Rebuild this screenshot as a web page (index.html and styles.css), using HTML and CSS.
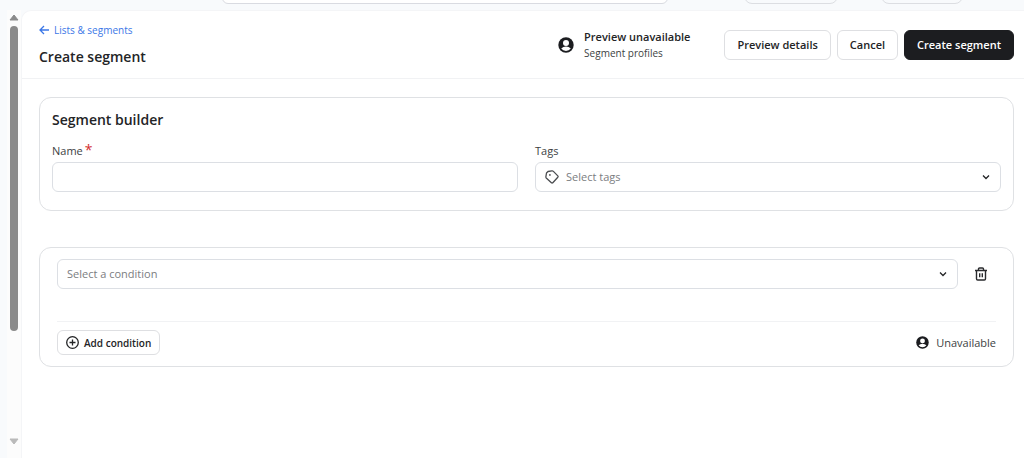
FILE: index.html
```html
<!DOCTYPE html>
<html lang="en">
<head>
    <meta charset="UTF-8">
    <meta name="viewport" content="width=device-width, initial-scale=1.0">
    <title>Create segment</title>
    <link rel="stylesheet" href="styles.css">
</head>
<body>
    <svg class="sprite" aria-hidden="true">
        <symbol id="icon-profile" viewBox="0 0 16 16">
            <circle cx="8" cy="8" r="7.700" fill="#1c1d20"/>
            <circle cx="8" cy="6" r="3" fill="#fff"/>
            <path d="M3.200 11.500a6.800 6.800 0 0 1 9.600 0a6 6 0 0 1-9.600 0z" fill="#fff"/>
        </symbol>
        <symbol id="icon-chevron" viewBox="0 0 8 8">
            <path d="M1 2.500l3 3 3-3" fill="none" stroke="#232426" stroke-width="1.300"/>
        </symbol>
    </svg>

    <div class="topbar">
        <input type="search" class="topbar-search" aria-label="Search">
        <button type="button" class="topbar-btn topbar-help" aria-label="Help"></button>
        <button type="button" class="topbar-btn topbar-account" aria-label="Account"></button>
    </div>

    <div class="layout">
        <div class="scrollbar">
            <svg width="10" height="7" viewBox="0 0 10 7"><path d="M5 1L9 6H1z" fill="#8b8b8b" stroke="#8b8b8b" stroke-linejoin="round"/></svg>
            <div class="scroll-track"><div class="scroll-thumb"></div></div>
            <svg width="10" height="7" viewBox="0 0 10 7"><path d="M5 6L9 1H1z" fill="#bababa" stroke="#bababa" stroke-linejoin="round"/></svg>
        </div>

        <main class="panel">
            <header class="page-header">
                <div class="heading">
                    <a href="#" class="back-link">
                        <svg width="10" height="10" viewBox="0 0 10 10"><path d="M10 5H1M5 1L1 5l4 4" fill="none" stroke="#3b77e7" stroke-width="1.300"/></svg>
                        Lists &amp; segments
                    </a>
                    <h1>Create segment</h1>
                </div>
                <div class="preview">
                    <svg width="16" height="16"><use href="#icon-profile"/></svg>
                    <div>
                        <strong>Preview unavailable</strong>
                        <span>Segment profiles</span>
                    </div>
                </div>
                <div class="actions">
                    <button type="button" class="btn">Preview details</button>
                    <button type="button" class="btn">Cancel</button>
                    <button type="submit" form="segmentForm" class="btn btn-primary">Create segment</button>
                </div>
            </header>

            <form id="segmentForm" class="content">
                <section class="card builder">
                    <h2>Segment builder</h2>
                    <div class="fields">
                        <div class="form-group">
                            <label for="name">Name<span class="required">*</span></label>
                            <input type="text" id="name" class="control">
                        </div>
                        <div class="form-group">
                            <label for="tags">Tags</label>
                            <div class="select-wrap">
                                <svg class="tag-icon" width="14" height="14" viewBox="0 0 14 14">
                                    <path d="M1.500 3L3 1.500 6.900.9Q7.800.8 8.400 1.400L12.800 5.900Q13.400 6.500 12.800 7.200L7.800 12.700Q7.100 13.300 6.400 12.700L1.500 8.200Q.8 7.500.9 6.700z" fill="none" stroke="#4b4d50" stroke-width="1.300" stroke-linejoin="round"/>
                                    <circle cx="4.900" cy="4.900" r=".9" fill="#4b4d50"/>
                                </svg>
                                <select id="tags" class="control has-icon">
                                    <option>Select tags</option>
                                </select>
                                <svg class="chevron" width="8" height="8"><use href="#icon-chevron"/></svg>
                            </div>
                        </div>
                    </div>
                </section>

                <section class="card conditions">
                    <div class="condition-row">
                        <div class="select-wrap">
                            <select class="control" aria-label="Condition">
                                <option>Select a condition</option>
                            </select>
                            <svg class="chevron" width="8" height="8"><use href="#icon-chevron"/></svg>
                        </div>
                        <button type="button" class="delete-btn" aria-label="Delete condition">
                            <svg width="14" height="14" viewBox="0 0 14 14"><path d="M1 3.500h12M4.500 3.500V2Q4.500 1 5.500 1h3Q9.500 1 9.500 2v1.500M2.500 3.500v8.300Q2.500 13 3.700 13h6.600Q11.500 13 11.500 11.800V3.500M5.700 6.300v4M8.300 6.300v4" fill="none" stroke="#292a2d" stroke-width="1.400"/></svg>
                        </button>
                    </div>
                    <div class="condition-footer">
                        <button type="button" class="btn btn-small">
                            <svg width="13" height="13" viewBox="0 0 13 13"><path d="M6.500 3.500v6M3.500 6.500h6" stroke="#232426" stroke-width="1.300"/><circle cx="6.500" cy="6.500" r="5.800" fill="none" stroke="#232426" stroke-width="1.300"/></svg>
                            Add condition
                        </button>
                        <div class="count">
                            <svg width="13" height="13"><use href="#icon-profile"/></svg>
                            Unavailable
                        </div>
                    </div>
                </section>
            </form>
        </main>
    </div>
</body>
</html>
```
FILE: styles.css
```css
* { box-sizing: border-box; }
body { font-family: "Segoe UI", "Open Sans", "Noto Sans", sans-serif; font-size: 11px; line-height: 16px; color: #232426; background: #f8fafc; margin: 0; min-height: 100vh; display: flex; flex-direction: column; }
h1, h2 { margin: 0; font-weight: 600; }
svg { display: block; flex: none; }
button, input, select { font: inherit; color: inherit; margin: 0; }
button { cursor: pointer; }
.sprite { position: absolute; width: 0; height: 0; }

.topbar { height: 10px; display: flex; align-items: flex-end; padding: 0 61px 6px 222px; overflow: hidden; }
.topbar-search { flex: 1; height: 30px; border: 1px solid #d9dbe1; border-radius: 6px; background: #fff; }
.topbar-btn { height: 30px; border: 1px solid #dcdee2; border-radius: 8px; background: #f8fafc; }
.topbar-help { width: 94px; margin-left: 76px; }
.topbar-account { width: 82px; margin-left: 43px; }

.layout { flex: 1; display: flex; }
.scrollbar { width: 14px; margin-left: 7px; padding: 4px 0 13px; background: #fcfcfc; display: flex; flex-direction: column; align-items: center; gap: 5px; }
.scroll-track { flex: 1; width: 8px; }
.scroll-thumb { height: 75%; background: #8b8b8b; border-radius: 4px; }

.panel { flex: 1; background: #fff; border-left: 1px solid #f4f5f7; border-top: 1px solid #f4f5f7; border-top-left-radius: 10px; }
.page-header { display: flex; align-items: center; padding: 11px 10px 11px 17px; border-bottom: 1px solid #f1f2f4; }
.heading { flex: 1; }
.back-link { display: inline-flex; align-items: center; gap: 5px; font-size: 10px; color: #3b77e7; text-decoration: none; }
.heading h1 { font-size: 14px; line-height: 20px; margin-top: 8px; }
.preview { display: flex; align-items: center; gap: 10px; margin-right: 34px; }
.preview strong, .preview span { display: block; }
.preview strong { font-weight: 600; }
.preview span { color: #3d3f43; font-size: 10px; }
.actions { display: flex; gap: 6px; }
.btn { height: 30px; padding: 0 12px; font-weight: 600; background: #fff; border: 1px solid #dedfe2; border-radius: 6px; white-space: nowrap; }
.btn-primary { background: #1c1d20; border-color: #1c1d20; color: #fff; }
.btn-small { display: flex; align-items: center; gap: 5px; height: 25px; padding: 0 8px; font-size: 10px; }

.content { padding: 18px 10px 18px 17px; }
.card { border: 1px solid #dfe1e4; border-radius: 12px; }
.builder { padding: 12px 12px 18px; margin-bottom: 36px; }
.builder h2 { font-size: 14px; line-height: 20px; }
.fields { display: grid; grid-template-columns: 1fr 1fr; gap: 17px; margin-top: 13px; }
.form-group { display: flex; flex-direction: column; }
label { margin-bottom: 3px; color: #3d3f43; }
.required { color: #d32f2f; font-size: 14px; line-height: 10px; margin-left: 2px; }
.control { width: 100%; height: 30px; padding: 0 9px; border: 1px solid #dcdfe4; border-radius: 6px; background: #fff; }
.select-wrap { flex: 1; position: relative; }
.select-wrap .control { display: block; appearance: none; color: #7b7d81; }
.select-wrap .has-icon { padding-left: 30px; }
.tag-icon { position: absolute; left: 10px; top: 8px; }
.chevron { position: absolute; right: 11px; top: 11px; pointer-events: none; }

.conditions { padding: 11px 17px; }
.condition-row { display: flex; align-items: center; gap: 12px; }
.delete-btn { width: 22px; height: 30px; padding: 0; margin-right: 4px; border: none; background: none; display: flex; align-items: center; justify-content: center; }
.condition-footer { display: flex; align-items: center; justify-content: space-between; margin-top: 32px; padding-top: 8px; border-top: 1px solid #f1f2f4; }
.count { display: flex; align-items: center; gap: 7px; color: #3d3f43; }
```
